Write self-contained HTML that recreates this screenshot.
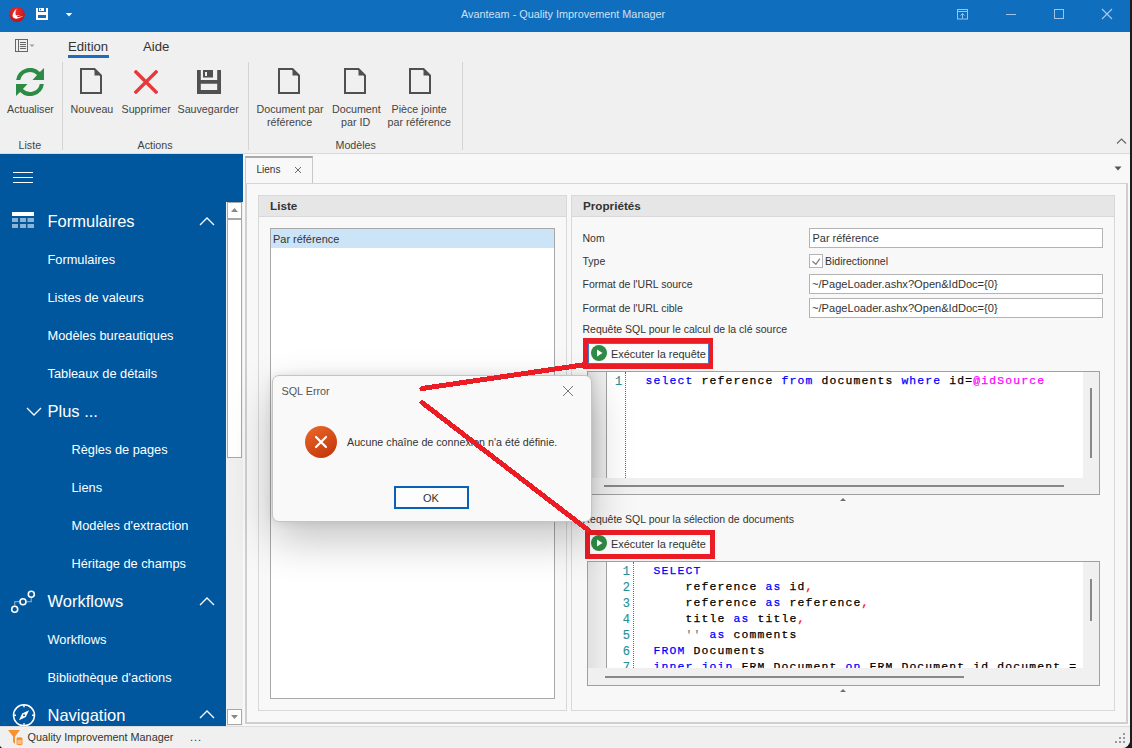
<!DOCTYPE html>
<html><head><meta charset="utf-8">
<style>
*{box-sizing:border-box;margin:0;padding:0}
html,body{width:1132px;height:748px;overflow:hidden;background:#1c1c1c}
body{position:relative;font-family:"Liberation Sans",sans-serif;font-size:11px;color:#333}
.a{position:absolute}
.t{position:absolute;white-space:pre;line-height:1}
#win{position:absolute;left:0;top:0;width:1130px;height:748px;background:#f0f0f0;border-bottom-right-radius:8px;border-bottom-left-radius:4px;overflow:hidden}
#title{left:0;top:0;width:1130px;height:32px;background:#106ebe}
#ribbon{left:0;top:32px;width:1130px;height:122px;background:#f0f0f0;border-bottom:1px solid #dadada}
.rt{color:#444;font-size:10.7px}
.sep{position:absolute;width:1px;background:#d4d4d4;top:62px;height:88px}
#nav{left:0;top:154px;width:243px;height:572px;background:#00579e}
.nv{color:#fff;font-size:12.8px}
.nh{color:#fff;font-size:16.5px}
#status{left:0;top:726px;width:1130px;height:22px;background:#f0f0f0;border-top:1px solid #dcdcdc}
.lbl{color:#333;font-size:10.5px}
.inp{position:absolute;background:#fff;border:1px solid #b4b4b4;height:20px}
.code{font-family:"Liberation Mono",monospace;font-size:11.4px;letter-spacing:1.16px;color:#000;line-height:16px;white-space:pre;position:absolute;-webkit-text-stroke:0.25px currentColor}
.kw{color:#0000ff}
.ln{color:#23909a;font-size:12px !important;-webkit-text-stroke:0.15px currentColor !important}
</style></head><body>
<div id="win">
<!-- TITLE BAR -->
<div id="title" class="a">
  <svg class="a" style="left:8px;top:6px" width="18" height="18" viewBox="0 0 18 18">
    <defs><radialGradient id="lg" cx="0.45" cy="0.3" r="0.75"><stop offset="0" stop-color="#ee3030"/><stop offset="1" stop-color="#bb1015"/></radialGradient></defs>
    <ellipse cx="9" cy="8.4" rx="7.9" ry="7.6" fill="url(#lg)"/>
    <path d="M8.8 2.4C6 4.8 4 8.3 4.8 10.8C5.8 13.2 9.5 13.6 15.6 9.8C12.5 11 10.5 11.4 9.5 11.1C8.8 10.7 9.2 9.6 10.5 9.7C11.4 9.8 12 10.2 12.4 10.5C12 9.4 10 8.8 7.9 9.4C7.1 7 7.4 4.8 8.8 2.4Z" fill="#fff"/>
  </svg>
  <svg class="a" style="left:36px;top:8px" width="12" height="12" viewBox="0 0 12 12">
    <path d="M0 0H2V4H10V0H12V12H0Z M2 7V10H10V7Z" fill="#fff" fill-rule="evenodd"/>
    <path d="M3 0H8V3H3Z M4 0.8V2.3H5V0.8Z" fill="#fff" fill-rule="evenodd"/>
  </svg>
  <svg class="a" style="left:65px;top:13px" width="8" height="4" viewBox="0 0 8 4"><path d="M0.8 0H7.2L4 3.5Z" fill="#fff"/></svg>
  <div class="t" style="left:461px;top:9px;color:#cfe0f2;font-size:10.85px">Avanteam - Quality Improvement Manager</div>
  <svg class="a" style="left:957px;top:9px" width="12" height="11" viewBox="0 0 12 11" fill="none" stroke="#9fc3e6" stroke-width="1">
    <rect x="0.5" y="0.5" width="10" height="9.5"/><line x1="0.5" y1="2.5" x2="10.5" y2="2.5"/><path d="M5.5 9.5V4.5M3.5 6.5L5.5 4.5L7.5 6.5"/>
  </svg>
  <div class="a" style="left:1006px;top:14px;width:10px;height:1px;background:#9fc3e6"></div>
  <div class="a" style="left:1054px;top:9px;width:10px;height:10px;border:1px solid #9fc3e6"></div>
  <svg class="a" style="left:1101px;top:8px" width="12" height="12" viewBox="0 0 12 12" stroke="#a9cbec" stroke-width="1.1"><path d="M1 1L11 11M11 1L1 11"/></svg>
</div>

<!-- RIBBON -->
<div id="ribbon" class="a">
  <svg class="a" style="left:15px;top:7px" width="21" height="14" viewBox="0 0 21 14" fill="none" stroke="#666" stroke-width="1">
    <rect x="0.5" y="0.5" width="12" height="12"/><line x1="3.5" y1="0.5" x2="3.5" y2="12.5"/>
    <path d="M5 3.5H11M5 5.5H11M5 7.5H11M5 9.5H11"/>
    <path d="M14.5 5.5H19.5L17 8Z" fill="#999" stroke="none"/>
  </svg>
  <div class="t" style="left:68px;top:8px;color:#333;font-size:13.15px">Edition</div>
  <div class="a" style="left:68px;top:23px;width:41px;height:3px;background:#1a6dc0"></div>
  <div class="t" style="left:143px;top:8px;color:#333;font-size:13.15px">Aide</div>
</div>
<div class="sep" style="left:62px"></div>
<div class="sep" style="left:248px"></div>
<div class="sep" style="left:462px"></div>

<!-- big buttons -->
<svg class="a" style="left:16px;top:68px" width="28" height="28" viewBox="0 0 28 28" fill="#2e8b45">
  <path d="M0.14 12A14 14 0 0 1 23.9 4.1L28 0V12H16.5L21.07 6.93A10 10 0 0 0 4.2 12Z"/>
  <path d="M27.86 16A14 14 0 0 1 4.1 23.9L0 28V16H11.5L6.93 21.07A10 10 0 0 0 23.8 16Z"/>
</svg>
<div class="t rt" style="left:7px;top:104px">Actualiser</div>
<div class="t rt" style="left:18.5px;top:140px">Liste</div>

<svg class="a" style="left:80px;top:68px" width="22" height="26" viewBox="0 0 22 26">
  <path d="M1 1H14.5L21 7.5V25H1Z" fill="none" stroke="#505050" stroke-width="2"/>
  <path d="M14.5 1V7.5H21Z" fill="#505050"/>
</svg>
<div class="t rt" style="left:70.5px;top:104px">Nouveau</div>
<svg class="a" style="left:134px;top:70px" width="24" height="24" viewBox="0 0 24 24" stroke="#e8383d" stroke-width="3.4" stroke-linecap="square"><path d="M2 2L22 22M22 2L2 22"/></svg>
<div class="t rt" style="left:121.5px;top:104px">Supprimer</div>
<svg class="a" style="left:197px;top:70px" width="24" height="24" viewBox="0 0 24 24" fill="#505050">
  <path fill-rule="evenodd" d="M0 0H3.8V10H20.2V0H24V24H0Z M3.8 13.8V20H20.2V13.8Z"/>
  <path fill-rule="evenodd" d="M6 0H16V7.6H6Z M8 2V6H10V2Z"/>
</svg>
<div class="t rt" style="left:177.5px;top:104px">Sauvegarder</div>
<div class="t rt" style="left:137.5px;top:140px">Actions</div>

<svg class="a" style="left:278px;top:68px" width="22" height="26" viewBox="0 0 22 26">
  <path d="M1 1H14.5L21 7.5V25H1Z" fill="none" stroke="#505050" stroke-width="2"/><path d="M14.5 1V7.5H21Z" fill="#505050"/>
</svg>
<svg class="a" style="left:344px;top:68px" width="22" height="26" viewBox="0 0 22 26">
  <path d="M1 1H14.5L21 7.5V25H1Z" fill="none" stroke="#505050" stroke-width="2"/><path d="M14.5 1V7.5H21Z" fill="#505050"/>
</svg>
<svg class="a" style="left:409px;top:68px" width="22" height="26" viewBox="0 0 22 26">
  <path d="M1 1H14.5L21 7.5V25H1Z" fill="none" stroke="#505050" stroke-width="2"/><path d="M14.5 1V7.5H21Z" fill="#505050"/>
</svg>
<div class="t rt" style="left:256.5px;top:104px">Document par</div>
<div class="t rt" style="left:267px;top:117px">référence</div>
<div class="t rt" style="left:332px;top:104px">Document</div>
<div class="t rt" style="left:341px;top:117px">par ID</div>
<div class="t rt" style="left:391.5px;top:104px">Pièce jointe</div>
<div class="t rt" style="left:387.5px;top:117px">par référence</div>
<div class="t rt" style="left:335.5px;top:140px">Modèles</div>
<svg class="a" style="left:1116px;top:137px" width="11" height="8" viewBox="0 0 11 8" fill="none" stroke="#666" stroke-width="1.1"><path d="M1 6.5L5.5 2L10 6.5"/></svg>

<!-- TAB STRIP + CONTENT -->
<div class="a" style="left:243px;top:154px;width:887px;height:572px;background:#f8f8f8"></div>
<div class="a" style="left:245px;top:156px;width:68px;height:28px;background:#f8f8f8;border:1px solid #c8c8c8;border-top:2px solid #aaaaaa;border-bottom:none"></div>
<div class="t" style="left:256.5px;top:164.5px;color:#333;font-size:10px">Liens</div>
<svg class="a" style="left:294px;top:166px" width="8" height="8" viewBox="0 0 8 8" stroke="#6a6a6a" stroke-width="1"><path d="M1 1L7 7M7 1L1 7"/></svg>
<svg class="a" style="left:1114px;top:166px" width="8" height="5" viewBox="0 0 8 5"><path d="M0.5 0.5H7.5L4 4.5Z" fill="#555"/></svg>
<div class="a" style="left:245px;top:183px;width:883px;height:541px;border:2px solid #cfcfcf;border-top:1px solid #d4d4d4;background:#f8f8f8"></div>

<!-- LISTE GROUP -->
<div class="a" style="left:258px;top:195px;width:309px;height:516px;border:1px solid #d8d8d8;background:#f8f8f8"></div>
<div class="a" style="left:259px;top:196px;width:307px;height:21px;background:#e6e6e6;border-bottom:1px solid #d8d8d8"></div>
<div class="t" style="left:270px;top:200px;font-weight:bold;color:#333;font-size:11.7px">Liste</div>
<div class="a" style="left:270px;top:228px;width:285px;height:471px;background:#fff;border:1px solid #a8a8a8"></div>
<div class="a" style="left:271px;top:229px;width:283px;height:19px;background:#cce4f7"></div>
<div class="t lbl" style="left:273px;top:234px;font-size:10.95px">Par référence</div>

<!-- PROPRIETES GROUP -->
<div class="a" style="left:571px;top:195px;width:544px;height:516px;border:1px solid #d8d8d8;background:#f8f8f8"></div>
<div class="a" style="left:572px;top:196px;width:542px;height:21px;background:#e6e6e6;border-bottom:1px solid #d8d8d8"></div>
<div class="t" style="left:583px;top:200px;font-weight:bold;color:#333;font-size:11.7px">Propriétés</div>

<div class="t lbl" style="left:582.5px;top:233px">Nom</div>
<div class="t lbl" style="left:582.5px;top:256px">Type</div>
<div class="t lbl" style="left:582.5px;top:279px">Format de l'URL source</div>
<div class="t lbl" style="left:582.5px;top:303px">Format de l'URL cible</div>
<div class="t lbl" style="left:582.5px;top:324px">Requête SQL pour le calcul de la clé source</div>

<div class="inp" style="left:809px;top:228px;width:294px;height:20px"></div>
<div class="t lbl" style="left:812.5px;top:233px;font-size:10.95px">Par référence</div>
<div class="a" style="left:809px;top:254px;width:14px;height:14px;border:1px solid #b4b4b4;background:#fff"></div>
<svg class="a" style="left:811px;top:257px" width="10" height="9" viewBox="0 0 10 9" fill="none" stroke="#858585" stroke-width="1.4"><path d="M1.4 4.2L4.9 7.3L8.9 1.6"/></svg>
<div class="t lbl" style="left:825px;top:256px">Bidirectionnel</div>
<div class="inp" style="left:809px;top:274px;width:294px;height:20px"></div>
<div class="t lbl" style="left:812px;top:279px;font-size:11.1px">~/PageLoader.ashx?Open&amp;IdDoc={0}</div>
<div class="inp" style="left:809px;top:298px;width:294px;height:20px"></div>
<div class="t lbl" style="left:812px;top:303px;font-size:11.1px">~/PageLoader.ashx?Open&amp;IdDoc={0}</div>

<!-- exec button 1 -->
<div class="a" style="left:583px;top:338px;width:130px;height:31px;border:5px solid #ec1c24;background:#fff"></div>
<div class="a" style="left:588px;top:343px;width:121px;height:21px;border:1px solid #3b7bd4;background:#fbfbfb"></div>
<svg class="a" style="left:591px;top:345px" width="16" height="16" viewBox="0 0 16 16"><circle cx="8" cy="8" r="8" fill="#2e8b45"/><path d="M6 4.5V11.5L11.5 8Z" fill="#fff"/></svg>
<div class="t lbl" style="left:611px;top:349px;font-size:10.95px">Exécuter la requête</div>

<!-- editor 1 -->
<div class="a" style="left:587px;top:371px;width:513px;height:124px;border:1px solid #a0a0a0;background:#f0f0f0"></div>
<div class="a" style="left:588px;top:372px;width:495px;height:106px;background:#fff"></div>
<div class="a" style="left:588px;top:372px;width:18px;height:106px;background:linear-gradient(90deg,#e0e0e0,#efefef)"></div>
<div class="a" style="left:606px;top:372px;width:1px;height:106px;background:#a0a0a0"></div>
<div class="a" style="left:625px;top:372px;width:0;height:106px;border-left:1px dotted #178a8a"></div>
<div class="code ln" style="left:615px;top:374px;width:8px;text-align:right">1</div>
<div class="code" style="left:645.5px;top:373px"><span class="kw">select</span> reference <span class="kw">from</span> documents <span class="kw">where</span> id=<span style="color:#ff00ff">@idSource</span></div>
<div class="a" style="left:604px;top:485px;width:460px;height:2px;background:#888"></div>
<div class="a" style="left:1090px;top:388px;width:2px;height:70px;background:#888"></div>
<svg class="a" style="left:840px;top:498px" width="6" height="3" viewBox="0 0 6 3"><path d="M0 3H6L3 0Z" fill="#707070"/></svg>

<div class="t lbl" style="left:582.5px;top:514px">Requête SQL pour la sélection de documents</div>

<!-- exec button 2 -->
<div class="a" style="left:585px;top:530px;width:130px;height:29px;border:5px solid #ec1c24;background:#fff"></div>
<div class="a" style="left:590px;top:535px;width:120px;height:19px;background:#fbfbfb"></div>
<svg class="a" style="left:591px;top:535px" width="16" height="16" viewBox="0 0 16 16"><circle cx="8" cy="8" r="8" fill="#2e8b45"/><path d="M6 4.5V11.5L11.5 8Z" fill="#fff"/></svg>
<div class="t lbl" style="left:611px;top:539px;font-size:10.95px">Exécuter la requête</div>

<!-- editor 2 -->
<div class="a" style="left:587px;top:561px;width:513px;height:125px;border:1px solid #a0a0a0;background:#f0f0f0"></div>
<div class="a" style="left:588px;top:562px;width:495px;height:106px;background:#fff;overflow:hidden">
  <div class="a" style="left:0;top:0;width:18px;height:106px;background:linear-gradient(90deg,#e0e0e0,#efefef)"></div>
  <div class="a" style="left:18px;top:0;width:1px;height:106px;background:#a0a0a0"></div>
  <div class="a" style="left:45px;top:0;width:0;height:106px;border-left:1px dotted #178a8a"></div>
  <div class="code ln" style="left:27px;top:2px;text-align:right;width:16px">1
2
3
4
5
6
7</div>
  <div class="code" style="left:65.5px;top:1px"><span class="kw">SELECT</span>
    reference <span class="kw">as</span> id<span style="color:red">,</span>
    reference <span class="kw">as</span> reference<span style="color:red">,</span>
    title <span class="kw">as</span> title<span style="color:red">,</span>
    <span style="color:#808080">''</span> <span class="kw">as</span> comments
<span class="kw">FROM</span> Documents
<span class="kw">inner join</span> FRM_Document <span class="kw">on</span> FRM_Document.id_document = </div>
</div>
<div class="a" style="left:605px;top:676px;width:359px;height:2px;background:#888"></div>
<div class="a" style="left:1090px;top:579px;width:2px;height:42px;background:#888"></div>
<svg class="a" style="left:840px;top:689px" width="6" height="3" viewBox="0 0 6 3"><path d="M0 3H6L3 0Z" fill="#707070"/></svg>

<!-- NAV -->
<div id="nav" class="a"></div>
<div class="a" style="left:226px;top:202px;width:17px;height:524px;background:#f0f0f0"></div>
<div class="a" style="left:227px;top:202px;width:15px;height:256px;background:#fff;border:1px solid #a8a8a8"></div>
<div class="a" style="left:227px;top:218px;width:15px;height:2px;background:#a8a8a8"></div>
<svg class="a" style="left:231px;top:208px" width="7" height="4" viewBox="0 0 7 4"><path d="M0 4H7L3.5 0Z" fill="#888"/></svg>
<div class="a" style="left:227px;top:709px;width:15px;height:16px;background:#fff;border:1px solid #a8a8a8"></div>
<svg class="a" style="left:231px;top:715px" width="7" height="4" viewBox="0 0 7 4"><path d="M0 0H7L3.5 4Z" fill="#888"/></svg>


<div class="a" style="left:13px;top:172px;width:20px;height:1px;background:#fff"></div>
<div class="a" style="left:13px;top:177px;width:20px;height:1px;background:#fff"></div>
<div class="a" style="left:13px;top:182px;width:20px;height:1px;background:#fff"></div>

<svg class="a" style="left:12px;top:212px" width="22" height="17" viewBox="0 0 22 17">
  <rect x="0" y="0" width="22" height="4" fill="#fff"/>
  <g fill="#fff" fill-opacity="0.55"><rect x="0" y="6" width="6" height="4"/><rect x="8" y="6" width="6" height="4"/><rect x="15.5" y="6" width="6.5" height="4"/>
  <rect x="0" y="12" width="6" height="4"/><rect x="8" y="12" width="6" height="4"/><rect x="15.5" y="12" width="6.5" height="4"/></g>
</svg>
<div class="t nh" style="left:47.5px;top:213px">Formulaires</div>
<svg class="a" style="left:199px;top:216px" width="16" height="10" viewBox="0 0 16 10" fill="none" stroke="#fff" stroke-width="1.3"><path d="M1 9L8 2L15 9"/></svg>
<div class="t nv" style="left:47.5px;top:254px">Formulaires</div>
<div class="t nv" style="left:47.5px;top:292px">Listes de valeurs</div>
<div class="t nv" style="left:47.5px;top:330px">Modèles bureautiques</div>
<div class="t nv" style="left:47.5px;top:368px">Tableaux de détails</div>
<svg class="a" style="left:26px;top:406px" width="16" height="11" viewBox="0 0 16 11" fill="none" stroke="#fff" stroke-width="1.3"><path d="M1 2L8 9L15 2"/></svg>
<div class="t nh" style="left:47.5px;top:403px">Plus ...</div>
<div class="t nv" style="left:71.5px;top:444px">Règles de pages</div>
<div class="t nv" style="left:71.5px;top:482px">Liens</div>
<div class="t nv" style="left:71.5px;top:520px">Modèles d'extraction</div>
<div class="t nv" style="left:71.5px;top:558px">Héritage de champs</div>

<svg class="a" style="left:9px;top:589px" width="28" height="26" viewBox="0 0 28 26">
  <path d="M5.7 16.5V12.7H10 M18 12.7H22.3V9" fill="none" stroke="#fff" stroke-opacity="0.45" stroke-width="1.3"/>
  <g fill="none" stroke="#fff" stroke-width="1.6"><circle cx="5.7" cy="20.3" r="3"/><circle cx="14" cy="12.7" r="3"/><circle cx="22.3" cy="5.2" r="3"/></g>
</svg>
<div class="t nh" style="left:47.5px;top:593px">Workflows</div>
<svg class="a" style="left:199px;top:596px" width="16" height="10" viewBox="0 0 16 10" fill="none" stroke="#fff" stroke-width="1.3"><path d="M1 9L8 2L15 9"/></svg>
<div class="t nv" style="left:47.5px;top:634px">Workflows</div>
<div class="t nv" style="left:47.5px;top:672px">Bibliothèque d'actions</div>

<svg class="a" style="left:12px;top:704px" width="24" height="24" viewBox="0 0 24 24">
  <circle cx="12" cy="11.3" r="10.5" fill="none" stroke="#fff" stroke-width="1.5"/>
  <path d="M12 1V3.3M12 19.3V21.6M1.7 11.3H4M20 11.3H22.3" stroke="#fff" stroke-width="1.5"/>
  <path d="M17 6.3L13.8 13.1L7 16.3L10.2 9.5Z" fill="#fff"/><circle cx="12" cy="11.3" r="1" fill="#00579e"/>
</svg>
<div class="t nh" style="left:47.5px;top:707px">Navigation</div>
<svg class="a" style="left:199px;top:709px" width="16" height="10" viewBox="0 0 16 10" fill="none" stroke="#fff" stroke-width="1.3"><path d="M1 9L8 2L15 9"/></svg>

<!-- STATUS -->
<div id="status" class="a"></div>
<svg class="a" style="left:8px;top:730px" width="15" height="16" viewBox="0 0 15 16">
  <path d="M0 0H12L7 6.5V14L5 12V6.5Z" fill="#f7932f"/>
  <ellipse cx="11.5" cy="8.5" rx="3" ry="1.3" fill="#f7932f"/>
  <path d="M8.5 8.5V14.5Q11.5 16 14.5 14.5V8.5Z" fill="#f7932f"/>
  <path d="M9.3 11H13.7M9.3 13H13.7" stroke="#fff" stroke-width="0.8"/>
</svg>
<div class="t" style="left:27.5px;top:732px;color:#333;font-size:10.85px">Quality Improvement Manager</div>
<div class="t" style="left:190px;top:732px;color:#333;font-size:11px;letter-spacing:1px">...</div>
<svg class="a" style="left:1115px;top:733px" width="10" height="10" viewBox="0 0 10 10" fill="#999">
  <rect x="8" y="0" width="2" height="2"/><rect x="4" y="4" width="2" height="2"/><rect x="8" y="4" width="2" height="2"/>
  <rect x="0" y="8" width="2" height="2"/><rect x="4" y="8" width="2" height="2"/><rect x="8" y="8" width="2" height="2"/>
</svg>

<!-- DIALOG -->
<div class="a" style="left:272px;top:375px;width:320px;height:147px;background:#f9f9f9;border:1px solid #c4c4c4;border-radius:7px;box-shadow:0 18px 44px rgba(0,0,0,0.24),0 0 10px rgba(0,0,0,0.10)"></div>
<div class="t" style="left:281.5px;top:386px;color:#555;font-size:10.8px">SQL Error</div>
<svg class="a" style="left:562px;top:385px" width="12" height="12" viewBox="0 0 12 12" stroke="#777" stroke-width="1"><path d="M1 1L11 11M11 1L1 11"/></svg>
<svg class="a" style="left:305px;top:426px" width="32" height="32" viewBox="0 0 32 32">
  <defs><linearGradient id="eg" x1="0" y1="0" x2="0.6" y2="1"><stop offset="0" stop-color="#ea6a2c"/><stop offset="1" stop-color="#c63a0c"/></linearGradient></defs>
  <circle cx="16" cy="16" r="16" fill="url(#eg)"/>
  <path d="M11 11L21 21M21 11L11 21" stroke="#fff" stroke-width="2.2" stroke-linecap="round"/>
</svg>
<div class="t" style="left:347px;top:437px;color:#333;font-size:10.71px">Aucune chaîne de connexion n'a été définie.</div>
<div class="a" style="left:394px;top:486px;width:75px;height:23px;border:2px solid #0a62b8;background:#fdfdfd"></div>
<div class="t" style="left:423px;top:493px;color:#333;font-size:11px">OK</div>

<!-- RED ARROWS -->
<svg class="a" style="left:0;top:0" width="1132" height="748" viewBox="0 0 1132 748" shape-rendering="crispEdges">
  <path d="M422 388.5L586 364.5" stroke="#ec1c24" stroke-width="5" stroke-linecap="round"/>
  <path d="M422 402.5L588 530" stroke="#ec1c24" stroke-width="5" stroke-linecap="round"/>
</svg>
</div>
</body></html>
